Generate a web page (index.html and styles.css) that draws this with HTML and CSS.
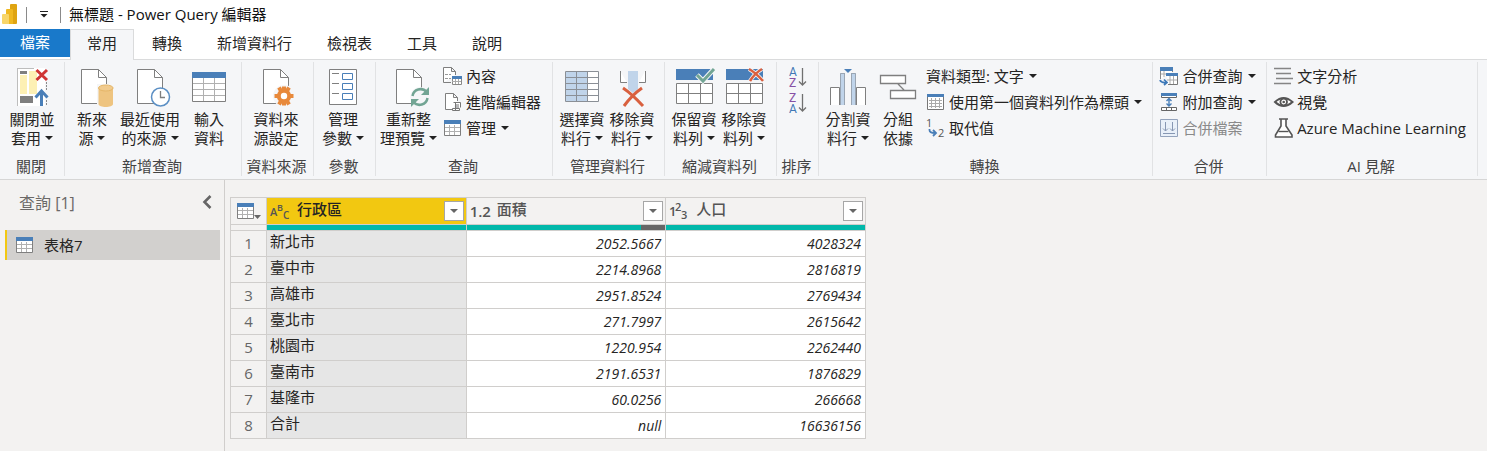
FILE: index.html
```html
<!DOCTYPE html>
<html lang="zh-Hant">
<head>
<meta charset="utf-8">
<title>無標題 - Power Query 編輯器</title>
<link rel="stylesheet" href="styles.css">
</head>
<body>
<svg class="defs" aria-hidden="true">
  <symbol id="doc" viewBox="0 0 26 35"><path d="M.5 .5H17.5L25.5 8.5V34.5H.5Z" fill="#fff" stroke="#7f7f7f"/><path d="M17.5 .5V8.5H25.5" fill="none" stroke="#7f7f7f"/></symbol>
  <symbol id="grid" viewBox="0 0 17 16"><path d="M.5 1.5H16.5V15.5H.5Z" fill="#fff" stroke="#7f7f7f"/><path d="M1 7.500H16M1 11.500H16M5.500 5V15M10.500 5V15" stroke="#b0b0b0" fill="none"/><path d="M0 0H17V4H0Z" fill="#4a7fb8"/></symbol>
</svg>

<header class="titlebar">
  <svg class="logo" width="16" height="21" viewBox="0 0 16 21"><path d="M8 1Q8 0 9 0H14Q15 0 15 1V19Q15 20 14 20H8Z" fill="#dfa411"/><path d="M4 6Q4 5 5 5H10Q11 5 11 6V20H4Z" fill="#f0b820"/><path d="M0 11Q0 10 1 10H6Q7 10 7 11V20H1Q0 20 0 19Z" fill="#f8d568"/></svg>
  <span class="bar"></span>
  <button class="quick" aria-label="自訂快速存取工具列"><svg width="8" height="7" viewBox="0 0 8 7"><path d="M0 .5H8" stroke="#222"/><path d="M.5 3H7.5L4 6.5Z" fill="#222"/></svg></button>
  <span class="bar"></span>
  <h1 class="title">無標題 - Power Query 編輯器</h1>
</header>

<nav class="tabs">
  <button class="tab tab-file">檔案</button>
  <button class="tab tab-active">常用</button>
  <button class="tab">轉換</button>
  <button class="tab">新增資料行</button>
  <button class="tab">檢視表</button>
  <button class="tab">工具</button>
  <button class="tab">說明</button>
</nav>

<div class="ribbon">
  <section class="group group-close">
    <div class="tools">
      <button class="big"><svg class="icon" viewBox="0 0 44 40"><path d="M7 1H35V39H7Z" fill="#fff"/><path d="M7.500 1V39M7 1.500H24" stroke="#bdbdbd" fill="none"/><path d="M36.500 15V24M36.500 33V39" stroke="#8a8a8a" stroke-dasharray="2 1"/><path d="M10 4H17V7H10ZM10 29H23V36H10Z" fill="#7f7f7f"/><path d="M10 8H17V27H10ZM19 4H27V27H19Z" fill="#fdf0b4"/><path d="M26.500 3L37 13M37 3L26.500 13" stroke="#cf3434" stroke-width="3"/><path d="M31.500 39V25M25.500 30.500L31.500 24L37.500 30.500" stroke="#4a7fb8" stroke-width="3" fill="none"/></svg><span>關閉並<br>套用<i class="caret"></i></span></button>
    </div>
    <h2 class="group-name">關閉</h2>
  </section>

  <section class="group group-new">
    <div class="tools">
      <button class="big"><svg class="icon" viewBox="0 0 44 40"><use href="#doc" x="11" y="2" width="26" height="35"/><path d="M27 17H44V40H27Z" fill="#f5f6f8"/><path d="M28.500 21V37C28.500 41 43 41 43 37V21Z" fill="#eec480"/><ellipse cx="35.800" cy="21" rx="7.300" ry="3" fill="#f1cb8e" stroke="#e5b668"/></svg><span>新來<br>源<i class="caret"></i></span></button>
      <button class="big"><svg class="icon" viewBox="0 0 44 40"><use href="#doc" x="9" y="2" width="26" height="35"/><circle cx="32.500" cy="30" r="9" fill="#fff" stroke="#5b8fc4" stroke-width="1.500"/><path d="M32.500 24V30.500H37" stroke="#7f7f7f" stroke-width="1.300" fill="none"/></svg><span>最近使用<br>的來源<i class="caret"></i></span></button>
      <button class="big"><svg class="icon" viewBox="0 0 44 40"><path d="M5.500 5.500H38.500V34.500H5.500Z" fill="#fff" stroke="#7f7f7f"/><path d="M6 16.500H38M6 22.500H38M6 28.500H38M16.500 11V34M27.500 11V34" stroke="#b0b0b0"/><path d="M5 5H39V11H5Z" fill="#4a7fb8"/></svg><span>輸入<br>資料</span></button>
    </div>
    <h2 class="group-name">新增查詢</h2>
  </section>

  <section class="group group-source">
    <div class="tools">
      <button class="big"><svg class="icon" viewBox="0 0 44 40"><use href="#doc" x="9" y="2" width="26" height="35"/><circle cx="30" cy="29" r="11" fill="#f5f6f8"/><circle cx="30" cy="29" r="5.200" fill="#fff" stroke="#e8893b" stroke-width="4"/><path d="M30 19.500V23M30 35V38.500M20.500 29H24M36 29H39.500M25 20.500L27 24M35 37.500L33 34M35 20.500L33 24M25 37.500L27 34" stroke="#e8893b" stroke-width="4"/></svg><span>資料來<br>源設定</span></button>
    </div>
    <h2 class="group-name">資料來源</h2>
  </section>

  <section class="group group-param">
    <div class="tools">
      <button class="big"><svg class="icon" viewBox="0 0 44 40"><path d="M8.500 2.500H35.500V37.500H8.500Z" fill="#fff" stroke="#7f7f7f"/><path d="M11 6.500H18M11 16.500H18M11 26.500H18" stroke="#7f7f7f"/><path d="M21.500 6.500H31.500V12.500H21.500ZM21.500 16.500H31.500V22.500H21.500ZM21.500 26.500H31.500V32.500H21.500Z" fill="#fff" stroke="#4a7fb8"/></svg><span>管理<br>參數<i class="caret"></i></span></button>
    </div>
    <h2 class="group-name">參數</h2>
  </section>

  <section class="group group-query">
    <div class="tools">
      <button class="big"><svg class="icon" viewBox="0 0 44 40"><use href="#doc" x="10" y="2" width="26" height="35"/><circle cx="34" cy="30" r="10" fill="#f5f6f8"/><path d="M26.500 29A8 8 0 0 1 40.500 25M41.500 31A8 8 0 0 1 27.500 35" stroke="#72a594" stroke-width="2.500" fill="none"/><path d="M43 20V28H35ZM25 40V32H33Z" fill="#72a594"/></svg><span>重新整<br>理預覽<i class="caret"></i></span></button>
      <div class="stack">
        <button class="small"><svg class="mini" viewBox="0 0 19 18"><path d="M.500 15.500V.500H8.500L12.500 4.500V8M.500 15.500H8M8.500 .500V4.500H12.500" fill="#fff" stroke="#7f7f7f"/><path d="M2 7.500H5M2 11.500H5M6 7.500H8M6 11.500H8" stroke="#999"/><path d="M9.500 9.500H18.500V17.500H9.500Z" fill="#fff" stroke="#888"/><path d="M9 14.500H18M12.500 12V17M15.500 12V17" stroke="#aaa"/><path d="M9 9H19V12H9Z" fill="#4a7fb8"/></svg>內容</button>
        <button class="small"><svg class="mini" viewBox="0 0 19 18"><path d="M9 16.500H2.500V.500H10.500L14.500 4.500V8M10.500 .500V4.500H14.500" fill="#fff" stroke="#7f7f7f"/><path d="M10.500 9.500H17.500V14.500M12.500 10V17.500H9.500V15.500H16.500V17.500H12" fill="#fff" stroke="#777"/><path d="M13 12H16M13 14H16" stroke="#777"/></svg>進階編輯器</button>
        <button class="small"><svg class="mini" viewBox="0 0 19 18"><use href="#grid" x="1" y="1" width="17" height="16"/></svg>管理<i class="caret"></i></button>
      </div>
    </div>
    <h2 class="group-name">查詢</h2>
  </section>

  <section class="group group-pair">
    <div class="tools">
      <button class="big"><svg class="icon" viewBox="0 0 44 40"><path d="M5.500 4.500H38.500V34.500H5.500Z" fill="#fff"/><path d="M6 5H28V34H6Z" fill="#c0d4ea"/><path d="M5.500 4.500H38.500V34.500H5.500ZM5.500 10.500H38.500M5.500 16.500H38.500M5.500 22.500H38.500M5.500 28.500H38.500M16.500 4.500V34.500M27.500 4.500V34.500" fill="none" stroke="#8a8f96"/></svg><span>選擇資<br>料行<i class="caret"></i></span></button>
      <button class="big"><svg class="icon" viewBox="0 0 44 40"><path d="M10 4V15.500H17M35 4V15.500H29" fill="#fff"/><path d="M10.500 4V15.500H17M35.500 4V15.500H29" fill="none" stroke="#7f7f7f"/><path d="M18 4H28V22L23 26L18 22Z" fill="#c0d4ea"/><path d="M13 21Q22 27 33 39M32 21Q22 28 14 39" stroke="#d9603f" stroke-width="3" fill="none"/></svg><span>移除資<br>料行<i class="caret"></i></span></button>
    </div>
    <h2 class="group-name">管理資料行</h2>
  </section>

  <section class="group group-pair">
    <div class="tools">
      <button class="big"><svg class="icon" viewBox="0 0 44 40"><path d="M4 2H41V13H4Z" fill="#4a7fb8"/><path d="M4.500 16.500H40.500V36.500H4.500ZM4.500 26.500H40.500M16.500 16.500V36.500M28.500 16.500V36.500" fill="#fff" stroke="#7f7f7f"/><path d="M25 8L31 14L42 2" fill="none" stroke="#f5f6f8" stroke-width="5"/><path d="M25 8L31 14L42 2" fill="none" stroke="#72a594" stroke-width="3"/></svg><span>保留資<br>料列<i class="caret"></i></span></button>
      <button class="big"><svg class="icon" viewBox="0 0 44 40"><path d="M4 2H41V13H4Z" fill="#4a7fb8"/><path d="M4.500 16.500H40.500V36.500H4.500ZM4.500 26.500H40.500M16.500 16.500V36.500M28.500 16.500V36.500" fill="#fff" stroke="#7f7f7f"/><path d="M27 2Q34 6 41 14M40 2Q33 6 28 14" fill="none" stroke="#f5f6f8" stroke-width="4"/><path d="M27 2Q34 6 41 14M40 2Q33 6 28 14" fill="none" stroke="#d9603f" stroke-width="2.500"/></svg><span>移除資<br>料列<i class="caret"></i></span></button>
    </div>
    <h2 class="group-name">縮減資料列</h2>
  </section>

  <section class="group group-sort">
    <div class="tools">
      <div class="stack">
        <button class="small sort" aria-label="遞增排序"><svg width="18" height="26" viewBox="0 0 18 26"><text x="0" y="11" fill="#3f78b5" class="sort-letter">A</text><text x="0" y="22" fill="#8651a5" class="sort-letter">Z</text><path d="M13.500 3V20M10 16.500L13.500 20L17 16.500" fill="none" stroke="#707070" stroke-width="1.300"/></svg></button>
        <button class="small sort" aria-label="遞減排序"><svg width="18" height="26" viewBox="0 0 18 26"><text x="0" y="11" fill="#8651a5" class="sort-letter">Z</text><text x="0" y="22" fill="#3f78b5" class="sort-letter">A</text><path d="M13.500 3V20M10 16.500L13.500 20L17 16.500" fill="none" stroke="#707070" stroke-width="1.300"/></svg></button>
      </div>
    </div>
    <h2 class="group-name">排序</h2>
  </section>

  <section class="group group-transform">
    <div class="tools">
      <button class="big"><svg class="icon" viewBox="0 0 44 40"><path d="M4.500 38V20.500H13.500V38M30.500 38V20.500H39.500V38" fill="#fff" stroke="#7f7f7f"/><path d="M14 6H19V38H14ZM25 6H30V38H25Z" fill="#c0d4ea"/><path d="M14.500 38V6.500H19M29.500 38V6.500H25M18.500 6V38M25.500 6V38" fill="none" stroke="#9aa5b2"/><path d="M18 2H26L22 6Z" fill="#4a7fb8"/></svg><span>分割資<br>料行<i class="caret"></i></span></button>
      <button class="big"><svg class="icon" viewBox="0 0 44 40"><path d="M4.500 8.500H29.500V16.500H4.500ZM14.500 23.500H39.500V31.500H14.500ZM22 17L28 23" fill="#fff" stroke="#7f7f7f" stroke-width="1.300"/></svg><span>分組<br>依據</span></button>
      <div class="stack">
        <button class="small">資料類型: 文字<i class="caret"></i></button>
        <button class="small"><svg class="mini" viewBox="0 0 19 18"><path d="M1.500 1.500H17.500V16.500H1.500Z" fill="#fff" stroke="#777"/><path d="M3 7.500H16M3 10.500H16M3 13.500H16M5.500 5V15M9.500 5V15M13.500 5V15" stroke="#aaa"/><path d="M1 1H18V4H1Z" fill="#4a7fb8"/></svg>使用第一個資料列作為標頭<i class="caret"></i></button>
        <button class="small"><svg class="mini" viewBox="0 0 19 18"><text x="0" y="8" font-size="11" fill="#555" class="glyph">1</text><text x="12" y="18" font-size="11" fill="#555" class="glyph">2</text><path d="M3.500 10V11Q3.500 14 9 14M7 11L10 14L7 17" fill="none" stroke="#4a7fb8" stroke-width="1.800"/></svg>取代值</button>
      </div>
    </div>
    <h2 class="group-name">轉換</h2>
  </section>

  <section class="group group-combine">
    <div class="tools">
      <div class="stack">
        <button class="small"><svg class="mini" viewBox="0 0 19 18"><path d="M1.500 12V.500H13.500V5" fill="#fff" stroke="#888"/><path d="M2 7H7M5 4V10" stroke="#aaa"/><path d="M1 0H14V4H1Z" fill="#4a7fb8"/><path d="M7.500 6.500H18.500V17.500H9" fill="#fff" stroke="#777"/><path d="M8 13H18M11 9V17M14.500 9V17" stroke="#aaa"/><path d="M7 6H19V9H7Z" fill="#4a7fb8"/><path d="M1 13Q2 16 7 15.500M5 12.500L8 15.500L5 18" fill="none" stroke="#3c78b8" stroke-width="1.700"/></svg>合併查詢<i class="caret"></i></button>
        <button class="small"><svg class="mini" viewBox="0 0 19 18"><path d="M2.500 .500H17.500V4.500H2.500ZM2.500 14.500H17.500V17.500H2.500ZM7.500 14V17M12.500 14V17" fill="#fff" stroke="#666"/><path d="M2 0H18V3H2Z" fill="#4a7fb8"/><path d="M10 6V13M7.500 8L10 5.500L12.500 8M7.500 10.500L10 13L12.500 10.500" fill="none" stroke="#4a7fb8" stroke-width="1.400"/></svg>附加查詢<i class="caret"></i></button>
        <button class="small" disabled><svg class="mini" viewBox="0 0 19 18"><path d="M1.500 .500H18.500V17.500H1.500Z" fill="#e9f0f9" stroke="#94a3bc"/><path d="M6.500 3V12M4 9.500L6.500 12L9 9.500M13.500 3V12M11 9.500L13.500 12L16 9.500M4 14.500H16" fill="none" stroke="#8797b3"/></svg>合併檔案</button>
      </div>
    </div>
    <h2 class="group-name">合併</h2>
  </section>

  <section class="group group-ai">
    <div class="tools">
      <div class="stack">
        <button class="small"><svg class="mini" viewBox="0 0 19 18"><path d="M0 1.500H17M2 6.500H17M2 11.500H19M0 16.500H17" stroke="#858585" stroke-width="1.400"/></svg>文字分析</button>
        <button class="small"><svg class="mini" viewBox="0 0 19 18"><path d="M1 9Q9.500 1 18.500 9Q9.500 17 1 9Z" fill="#fff" stroke="#555" stroke-width="2"/><circle cx="9.700" cy="9" r="3.300" fill="#fff" stroke="#555" stroke-width="1.800"/><circle cx="9.700" cy="9" r="1.300" fill="#555"/></svg>視覺</button>
        <button class="small"><svg class="mini flask" viewBox="0 0 19 20"><path d="M5 1H14M7 1V8L1.500 17V19H18V17L12 8V1" fill="#fff" stroke="#555" stroke-width="1.600"/><path d="M4.500 13.500H14.500" stroke="#555" stroke-width="1.400"/></svg>Azure Machine Learning</button>
      </div>
    </div>
    <h2 class="group-name">AI 見解</h2>
  </section>
</div>

<div class="workspace">
  <aside class="queries">
    <div class="queries-head">
      <h2 class="queries-title">查詢 [1]</h2>
      <button class="collapse" aria-label="收合"><svg width="10" height="14" viewBox="0 0 10 14"><path d="M8.500 1L2.500 7L8.500 13" fill="none" stroke="#666" stroke-width="2.600"/></svg></button>
    </div>
    <button class="query"><svg width="17" height="16"><use href="#grid" width="17" height="16"/></svg>表格7</button>
  </aside>

  <main class="preview">
    <table class="data">
      <thead>
        <tr class="heads">
          <th class="num"><button class="table-menu" aria-label="資料表選項"><svg width="25" height="18" viewBox="0 0 25 18"><use href="#grid" x="0" y="1" width="17" height="16"/><path d="M17 13H24L20.500 17Z" fill="#666"/></svg></button></th>
          <th class="selected"><div class="head"><svg class="type" width="20" height="18" viewBox="0 0 20 18"><text x="0" y="14" font-size="11" class="type-text">A</text><text x="7" y="9" font-size="9" class="type-text">B</text><text x="13" y="17" font-size="10" class="type-text">C</text></svg><span class="head-name">行政區</span><button class="filter" aria-label="篩選行政區"><i></i></button></div></th>
          <th><div class="head"><span class="type type-decimal">1.2</span><span class="head-name">面積</span><button class="filter" aria-label="篩選面積"><i></i></button></div></th>
          <th><div class="head"><svg class="type" width="20" height="18" viewBox="0 0 20 18"><text x="0" y="14" font-size="13" class="type-text">1</text><text x="6" y="9" font-size="11" class="type-text">2</text><text x="12" y="17" font-size="11" class="type-text">3</text></svg><span class="head-name">人口</span><button class="filter" aria-label="篩選人口"><i></i></button></div></th>
        </tr>
        <tr class="quality"><td></td><td><div class="meter"></div></td><td><div class="meter meter-partial"></div></td><td><div class="meter"></div></td></tr>
      </thead>
      <tbody>
        <tr><th>1</th><td class="name">新北市</td><td>2052.5667</td><td>4028324</td></tr>
        <tr><th>2</th><td class="name">臺中市</td><td>2214.8968</td><td>2816819</td></tr>
        <tr><th>3</th><td class="name">高雄市</td><td>2951.8524</td><td>2769434</td></tr>
        <tr><th>4</th><td class="name">臺北市</td><td>271.7997</td><td>2615642</td></tr>
        <tr><th>5</th><td class="name">桃園市</td><td>1220.954</td><td>2262440</td></tr>
        <tr><th>6</th><td class="name">臺南市</td><td>2191.6531</td><td>1876829</td></tr>
        <tr><th>7</th><td class="name">基隆市</td><td>60.0256</td><td>266668</td></tr>
        <tr><th>8</th><td class="name">合計</td><td>null</td><td>16636156</td></tr>
      </tbody>
    </table>
  </main>
</div>
</body>
</html>
```
FILE: styles.css
```css
* { box-sizing: border-box; }
html, body { height: 100%; }
body {
  margin: 0;
  display: flex;
  flex-direction: column;
  background: #f3f2f1;
  color: #252423;
  font: 15px/19px "Open Sans", "Noto Sans CJK TC", sans-serif;
}
h1, h2 { margin: 0; font: inherit; }
button {
  margin: 0;
  padding: 0;
  border: 0;
  background: none;
  color: inherit;
  font: inherit;
}
svg { flex: none; overflow: visible; }
.defs { position: absolute; width: 0; height: 0; }
.glyph, .type-text { font-family: "Open Sans", sans-serif; }

.titlebar {
  display: flex;
  align-items: center;
  height: 29px;
  flex: none;
  padding-left: 2px;
  background: #fff;
}
.bar { width: 1px; height: 16px; background: #8a8a8a; }
.logo { margin-right: 8px; }
.quick { display: flex; justify-content: center; width: 33px; }
.title { padding-left: 8px; color: #111; }

.tabs {
  display: flex;
  flex: none;
  gap: 1px;
  height: 31px;
  background: #fff;
  border-bottom: 1px solid #dadbdc;
}
.tab { padding: 0 17px 1px; height: 29px; white-space: nowrap; }
.tab-file { height: 28px; padding: 0 20px 1px; margin-right: -1px; background: #1979ca; color: #fff; }
.tab-active {
  height: 31px;
  padding: 0 16px 3px;
  background: #f5f6f8;
  border: 1px solid #dadbdc;
  border-bottom: 0;
}

.ribbon {
  display: flex;
  flex: none;
  height: 120px;
  padding: 2px 0 3px;
  background: #f5f6f8;
  border-bottom: 1px solid #d6d6d6;
}
.group {
  display: flex;
  flex-direction: column;
  justify-content: space-between;
  flex: none;
  border-right: 1px solid #e1e2e4;
}
.group-name { padding-right: 2px; text-align: center; line-height: 19px; color: #444; }
.tools { display: flex; justify-content: center; }
.big {
  display: flex;
  flex-direction: column;
  align-items: center;
  gap: 3px;
  min-width: 50px;
  padding-top: 5px;
  white-space: nowrap;
}
.big > span { text-align: center; }
.icon { width: 44px; height: 40px; }
.caret {
  display: inline-block;
  margin-left: 4px;
  vertical-align: 4px;
  border: 4px solid transparent;
  border-top-color: #222;
  border-bottom: 0;
}
.stack { display: flex; flex-direction: column; padding-top: 1px; }
.small {
  display: flex;
  align-items: center;
  gap: 4px;
  height: 26px;
  white-space: nowrap;
}
.small .caret { margin-left: 1px; }
.small:disabled { color: #8a8a8a; }
.mini { width: 19px; height: 18px; }
.flask { height: 20px; }
.sort { padding-top: 3px; }
.sort-letter { font: 12px Roboto, sans-serif; }

.group-close { width: 65px; }
.group-new { width: 177px; }
.group-new .tools { gap: 4px; padding-right: 6px; }
.group-new .tools .big:first-child { padding-left: 2px; }
.group-source { width: 72px; }
.group-source .tools,
.group-param .tools { padding-right: 3px; }
.group-param { width: 62px; }
.group-query { width: 177px; }
.group-query .tools { gap: 6px; padding-right: 7px; }
.group-pair { width: 112px; }
.group-pair .tools { padding-right: 3px; }
.group-sort { width: 42px; }
.group-transform { width: 334px; }
.group-transform .tools { padding-right: 6px; }
.group-transform .stack { padding-left: 3px; }
.group-combine { width: 114px; }
.group-combine .tools,
.group-ai .tools { padding-right: 4px; }
.group-ai { width: 211px; }

.workspace { display: flex; flex: 1; }
.queries { width: 225px; flex: none; padding: 10px 4px 0 5px; border-right: 1px solid #d0cecc; }
.queries-head {
  display: flex;
  align-items: center;
  justify-content: space-between;
  padding: 0 8px 0 14px;
  height: 26px;
}
.queries-title { font-size: 16px; color: #6b6967; }
.collapse { display: flex; padding-bottom: 2px; }
.query {
  display: flex;
  align-items: center;
  gap: 11px;
  width: 100%;
  height: 30px;
  margin-top: 14px;
  padding-left: 9px;
  background: #d2d0ce;
  border-left: 2px solid #f2c811;
}

.preview { padding: 17px 0 0 5px; }
.data { width: 636px; table-layout: fixed; border-collapse: collapse; }
.data th, .data td { padding: 0; border: 1px solid #d0cecc; font-weight: 400; }
.data .num { width: 36px; }
.heads th { height: 27px; color: #555; }
.heads .selected { background: #f2c811; color: #252423; }
.head { display: flex; align-items: center; height: 26px; padding: 0 2px 0 3px; }
.head-name { flex: 1; padding: 0 0 4px 7px; text-align: left; font-weight: 500; }
.type { width: 20px; flex: none; }
.type-text { fill: #555; font-weight: 600; }
.type-decimal { font-size: 15px; font-weight: 600; white-space: nowrap; }
.filter {
  display: flex;
  align-items: center;
  justify-content: center;
  width: 20px;
  height: 20px;
  background: #fff;
  border: 1px solid #a6a6a6;
}
.filter i { border: 4px solid transparent; border-top-color: #666; border-bottom: 0; }
.table-menu { display: flex; padding-left: 6px; }
.quality td { height: 5px; line-height: 5px; border-bottom: 0; }
.meter { height: 5px; background: #01b8aa; }
.meter-partial { background: linear-gradient(to right, #01b8aa 88%, #666 88%); }
tbody th, tbody td { height: 26px; }
tbody th { color: #666; font-size: 15px; }
tbody td {
  background: #fff;
  color: #252423;
  text-align: right;
  font-size: 14px;
  font-style: italic;
}
.data tbody td { padding-right: 4px; }
.data tbody .name {
  padding: 0 0 5px 3px;
  background: #e6e6e6;
  text-align: left;
  font-size: 15px;
  font-style: normal;
}
```
